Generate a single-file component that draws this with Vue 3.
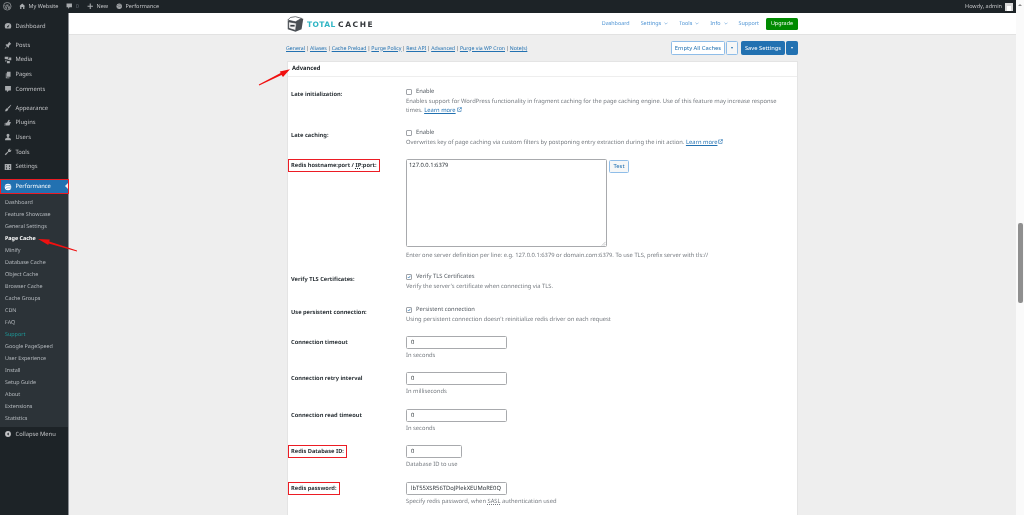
<script setup>
const topLinks = ['General','Aliases','Cache Preload','Purge Policy','Rest API','Advanced','Purge via WP Cron','Note(s)']
const menuA = [
  { t: 'Posts', d: 'M7 1l3 3-1 .6-2.200 2.200.2 1.600-1 1L4.200 7.600 1.500 10.500l-.5-.5 2.900-2.700L2 5.500l1-1 1.600.2L6.400 2.500z' },
  { t: 'Media', d: 'M1 1h5v3H1zM7 2h3v4H7V5H5V4h2zM2 5h3v1H3v2H2zM4 7h4v3H4z' },
  { t: 'Pages', d: 'M4 1h5v7H4zM2.500 3v7h5V9H3.500V3z' },
  { t: 'Comments', d: 'M1.500 1.500h8v6h-3l-2.500 2.500v-2.500H1.500z' },
]
const menuB = [
  { t: 'Appearance', d: 'M9.500 1L10 1.500 6.500 6.500 5 5zM4.500 5.500l1.500 1.500-.8 1.500C4 10 2.500 10 1 10c1-.7 1-2 1.500-3z' },
  { t: 'Plugins', d: 'M6.500 1L8 1.500 7 4h2.500l-.5 1.500L7.500 9H2V5h2zM1 5.500V9.500h.5V5.500z' },
  { t: 'Users', d: 'M5.500 1a2 2 0 0 1 2 2.200c0 1-.6 2-1.200 2.300v.8L9.500 8v2h-8V8l3.200-1.700v-.8C4.100 5.200 3.500 4.200 3.500 3.200a2 2 0 0 1 2-2.200z' },
  { t: 'Tools', d: 'M8 1a2.500 2.500 0 0 1 1 .2L7.500 2.700 8.300 3.500 9.800 2a2.500 2.500 0 0 1-3.300 3.300L2.500 10 1 8.500l4.700-4A2.500 2.500 0 0 1 8 1z' },
  { t: 'Settings', d: 'M1 1.500h9v8H1zM3 3v1.500h1V3zM3 6v2.500h1V6zM7 3v2.500h1V3zM7 7v1.500h1V7z' },
]
const sub = ['Dashboard','Feature Showcase','General Settings','Page Cache','Minify','Database Cache','Object Cache','Browser Cache','Cache Groups','CDN','FAQ','Support','Google PageSpeed','User Experience','Install','Setup Guide','About','Extensions','Statistics']
const subClass = (s) => ({ current: s === 'Page Cache', support: s === 'Support' })
const numeric = [
  { l: 'Connection timeout', v: '0', h: 'In seconds' },
  { l: 'Connection retry interval', v: '0', h: 'In milliseconds' },
  { l: 'Connection read timeout', v: '0', h: 'In seconds' },
]
</script>

<template>
  <div class="page">
    <header class="adminbar">
      <div class="ab-left">
        <svg class="ab-wp" viewBox="0 0 20 20"><circle cx="10" cy="10" r="9" fill="none" stroke="#a7aaad" stroke-width="1.600"/><path d="M4 7l3.500 9 2-6-1-3M8 7h5M11 7l3 9 2.500-7" fill="none" stroke="#a7aaad" stroke-width="1.600"/></svg>
        <span class="ab-item"><svg class="ab-ic" viewBox="0 0 12 12"><path d="M6 1l5.500 5H10v5H7.500V7.500h-3V11H2V6H.5z" fill="#a7aaad"/></svg>My Website</span>
        <span class="ab-item dim"><svg class="ab-ic" viewBox="0 0 12 12"><path d="M1 1h10v7H6.500L4 11V8H1z" fill="#a7aaad"/></svg>0</span>
        <span class="ab-item"><svg class="ab-ic" viewBox="0 0 12 12"><path d="M5 1h2v4h4v2H7v4H5V7H1V5h4z" fill="#a7aaad"/></svg>New</span>
        <span class="ab-item"><svg class="ab-ic" viewBox="0 0 12 12"><circle cx="6" cy="6" r="5" fill="#a7aaad"/><path d="M2 5c3-2 5-2 8-1M3 8c2-1.500 4-1.500 7-1" stroke="#1d2327" stroke-width=".7" fill="none"/></svg>Performance</span>
      </div>
      <div class="ab-right">Howdy, admin<span class="avatar"><i></i></span></div>
    </header>

    <div class="body">
      <aside class="side">
        <div class="m-item m-first"><svg class="m-ic" viewBox="0 0 11 11"><path d="M5.500 1.500a4.500 4.500 0 0 1 4.500 4.500c0 1.200-.4 2.300-1.100 3H2.100A4.600 4.600 0 0 1 1 6a4.500 4.500 0 0 1 4.500-4.500zM7.600 3.400L5.200 5.500a1 1 0 1 0 1 1z" fill="#a7aaad" fill-rule="evenodd"/></svg>Dashboard</div>
        <div class="m-group">
          <div v-for="m in menuA" :key="m.t" class="m-item"><svg class="m-ic" viewBox="0 0 11 11"><path :d="m.d" fill="#a7aaad" fill-rule="evenodd"/></svg>{{ m.t }}</div>
        </div>
        <div class="m-group">
          <div v-for="m in menuB" :key="m.t" class="m-item"><svg class="m-ic" viewBox="0 0 11 11"><path :d="m.d" fill="#a7aaad" fill-rule="evenodd"/></svg>{{ m.t }}</div>
        </div>
        <div class="m-perf">
          <svg class="m-ic" viewBox="0 0 11 11"><circle cx="5.500" cy="5.500" r="4.500" fill="#fff"/><path d="M1.500 4.500c3-1.500 5-1.500 8-.5M2.500 8c2-1.500 4-1.500 7-1" stroke="#2271b1" stroke-width=".7" fill="none"/></svg>Performance
          <span class="m-notch"></span>
        </div>
        <ul class="m-sub">
          <li v-for="s in sub" :key="s" :class="subClass(s)">{{ s }}</li>
        </ul>
        <div class="m-item m-collapse"><svg class="m-ic" viewBox="0 0 11 11"><circle cx="5.500" cy="5.500" r="4" fill="#c3c4c7"/><path d="M6.500 3.500v4l-2.500-2z" fill="#1d2327"/></svg>Collapse Menu</div>
      </aside>

      <main class="main">
        <div class="w3-head">
          <div class="w3-inner">
            <div class="logo">
              <svg class="logo-box" viewBox="0 0 22 20"><path d="M2 6.500L9 2l11 2-2 12-7 3-9-3z" fill="#4a4f54"/><path d="M3 7.500l9 1.500-.8 8.500-8-2.500z" fill="#f4f4f4" stroke="#3a3f44" stroke-width=".8"/><path d="M5 2.500l-3 3 9 2 7-4-7-2z" fill="#fff" stroke="#3a3f44" stroke-width=".8"/><path d="M5 11h5v2H5z" fill="#3a3f44"/></svg>
              <span class="logo-total">TOTAL</span><span class="logo-cache">CACHE</span>
            </div>
            <nav class="w3-nav">
              <a>Dashboard</a>
              <a>Settings<svg class="chev" viewBox="0 0 6 4"><path d="M.7.700L3 3l2.300-2.300" fill="none" stroke="#4f94d4" stroke-width=".8"/></svg></a>
              <a>Tools<svg class="chev" viewBox="0 0 6 4"><path d="M.7.700L3 3l2.300-2.300" fill="none" stroke="#4f94d4" stroke-width=".8"/></svg></a>
              <a>Info<svg class="chev" viewBox="0 0 6 4"><path d="M.7.700L3 3l2.300-2.300" fill="none" stroke="#4f94d4" stroke-width=".8"/></svg></a>
              <a>Support</a>
              <a class="upgrade">Upgrade</a>
            </nav>
          </div>
        </div>

        <div class="content">
          <div class="subbar">
            <div class="links">
              <template v-for="(l, i) in topLinks" :key="l">
                <a>{{ l }}</a><span v-if="i < topLinks.length - 1" class="sep">|</span>
              </template>
            </div>
            <div class="actions">
              <button class="btn ghost wide">Empty All Caches</button>
              <button class="btn ghost drop"><i class="caret dark"></i></button>
              <button class="btn solid save">Save Settings</button>
              <button class="btn solid drop"><i class="caret"></i></button>
            </div>
          </div>

          <section class="panel">
            <h3 class="panel-head">Advanced</h3>
            <div class="panel-body">
              <div class="row r-late">
                <div class="lab">Late initialization:</div>
                <div class="val">
                  <label class="check"><i class="cb"></i>Enable</label>
                  <p class="desc">Enables support for WordPress functionality in fragment caching for the page caching engine. Use of this feature may increase response times. <a>Learn more</a><svg class="ext" viewBox="0 0 8 8"><path d="M3 1.500H1v5.500h5.500V5M4 1h3v3M7 1L3.500 4.500" fill="none" stroke="#2271b1" stroke-width="1"/></svg></p>
                </div>
              </div>
              <div class="row r-late2">
                <div class="lab">Late caching:</div>
                <div class="val">
                  <label class="check"><i class="cb"></i>Enable</label>
                  <p class="desc">Overwrites key of page caching via custom filters by postponing entry extraction during the init action. <a>Learn more</a><svg class="ext" viewBox="0 0 8 8"><path d="M3 1.500H1v5.500h5.500V5M4 1h3v3M7 1L3.500 4.500" fill="none" stroke="#2271b1" stroke-width="1"/></svg></p>
                </div>
              </div>
              <div class="row r-redis">
                <div class="lab lab-top"><span class="mark">Redis hostname:port / <abbr>IP</abbr>:port:</span></div>
                <div class="val">
                  <div class="ta-row">
                    <div class="ta">127.0.0.1:6379<svg class="grip" viewBox="0 0 6 6"><path d="M5.500 1L1 5.500M5.500 3.500L3.500 5.500" stroke="#8c8f94" stroke-width=".6"/></svg></div>
                    <button class="btn ghost test">Test</button>
                  </div>
                  <p class="desc d-ta">Enter one server definition per line: e.g. 127.0.0.1:6379 or domain.com:6379. To use TLS, prefix server with tls://</p>
                </div>
              </div>
              <div class="row r-verify">
                <div class="lab">Verify TLS Certificates:</div>
                <div class="val">
                  <label class="check"><i class="cb on"><svg viewBox="0 0 8 8"><path d="M1.500 4l2 2L6.800 1.500" fill="none" stroke="#2271b1" stroke-width="1.400"/></svg></i>Verify TLS Certificates</label>
                  <p class="desc">Verify the server's certificate when connecting via TLS.</p>
                </div>
              </div>
              <div class="row r-persist">
                <div class="lab">Use persistent connection:</div>
                <div class="val">
                  <label class="check"><i class="cb on"><svg viewBox="0 0 8 8"><path d="M1.500 4l2 2L6.800 1.500" fill="none" stroke="#2271b1" stroke-width="1.400"/></svg></i>Persistent connection</label>
                  <p class="desc">Using persistent connection doesn't reinitialize redis driver on each request</p>
                </div>
              </div>
              <div v-for="n in numeric" :key="n.l" class="row r-num">
                <div class="lab lab-top">{{ n.l }}</div>
                <div class="val">
                  <div class="inp">{{ n.v }}</div>
                  <p class="desc d-in">{{ n.h }}</p>
                </div>
              </div>
              <div class="row r-num">
                <div class="lab lab-top"><span class="mark">Redis Database ID:</span></div>
                <div class="val">
                  <div class="inp short">0</div>
                  <p class="desc d-in">Database ID to use</p>
                </div>
              </div>
              <div class="row r-num">
                <div class="lab lab-top"><span class="mark">Redis password:</span></div>
                <div class="val">
                  <div class="inp">lbT55XSR56TDoJPlekXEUMoRE0Q</div>
                  <p class="desc d-in">Specify redis password, when <abbr>SASL</abbr> authentication used</p>
                </div>
              </div>
            </div>
          </section>
        </div>
      </main>

      <div class="scroll">
        <i class="sc-up"></i>
        <i class="sc-thumb"></i>
      </div>
    </div>

    <svg class="arrows" viewBox="0 0 1024 515">
      <path d="M258.800 84.600L280.600 73.100 279.800 71.500 290 69.300 283 77 281.500 75 259.200 85.400z" fill="#f01010"/>
      <path d="M77 250.600L49.300 241.400 49.700 239.600 38 239 48.300 245 48.700 243.400 77 251.400z" fill="#f01010"/>
    </svg>
  </div>
</template>

<style scoped>
.page { position: relative; width: 1024px; height: 515px; overflow: hidden; display: flex; flex-direction: column; background: #fafafa; font-family: "Noto Sans", "Open Sans", sans-serif; font-size: 5.800px; line-height: 9px; color: #50575e; text-rendering: geometricPrecision; filter: blur(.3px); }
.adminbar { height: 13px; flex: none; background: #1d2327; color: #c3c4c7; display: flex; justify-content: space-between; align-items: center; padding: 0 3px; width: 1016px; box-sizing: border-box; font-size: 5.500px; }
.ab-left { display: flex; align-items: center; }
.ab-wp { width: 8.500px; height: 8.500px; margin-right: 7.500px; }
.ab-item { display: flex; align-items: center; margin-right: 8px; gap: 3px; }
.ab-item.dim { color: #646970; }
.ab-ic { width: 6.500px; height: 6.500px; }
.ab-right { display: flex; align-items: center; gap: 3px; }
.avatar { width: 8px; height: 8px; background: #d9d9d9; display: flex; align-items: flex-end; justify-content: center; }
.avatar i { width: 3.500px; height: 5px; background: #fff; }

.body { flex: 1; min-height: 0; display: flex; }
.side { width: 68px; flex: none; background: #1d2327; border-right: 1px solid #8c8f94; color: #c3c4c7; font-size: 5.800px; }
.m-item { height: 14.600px; display: flex; align-items: center; padding-left: 4px; gap: 3.500px; }
.m-ic { width: 8px; height: 8px; flex: none; }
.m-first { margin-top: 6px; }
.m-group { margin-top: 4.500px; }
.m-perf { position: relative; margin-top: 5.500px; height: 15px; box-sizing: border-box; background: #2271b1; color: #fff; display: flex; align-items: center; padding-left: 3px; gap: 3.500px; border: 1px solid #ec1c24; width: 69px; }
.m-notch { position: absolute; right: 0; top: 3px; border: 3.500px solid transparent; border-right-color: #f0f0f1; border-left-width: 0; }
.m-sub { list-style: none; margin: 0; padding: 2px 0 2.500px 5px; background: #2c3338; }
.m-sub li { height: 12px; line-height: 12px; color: #b4b9be; font-size: 5.400px; }
.m-sub li.current { color: #fff; font-weight: 700; }
.m-sub li.support { color: #1d9a9a; }
.m-collapse { height: 15px; }

.main { flex: 1; min-width: 0; display: flex; flex-direction: column; background: #eeeeee; }
.w3-head { height: 21px; background: #fff; border-bottom: 1px solid #e2e2e2; flex: none; padding-left: 217px; }
.w3-inner { width: 512px; height: 21px; display: flex; align-items: center; justify-content: space-between; }
.logo { display: flex; align-items: center; }
.logo-box { width: 19px; height: 18px; margin-right: 2px; }
.logo-total { font-family: "DejaVu Sans", sans-serif; font-weight: 700; font-size: 7.500px; color: #2fb5c4; letter-spacing: .4px; margin-right: 2.500px; padding-top: 2px; }
.logo-cache { font-family: "DejaVu Sans", sans-serif; font-weight: 700; font-size: 7.500px; color: #33373b; letter-spacing: 1.600px; padding-top: 2px; }
.w3-nav { display: flex; align-items: center; gap: 11px; color: #4f94d4; font-size: 5.400px; }
.w3-nav a { display: flex; align-items: center; gap: 3px; }
.chev { width: 4px; height: 3px; }
.w3-nav .upgrade { height: 12px; padding: 0 5px; margin-left: -4px; background: #008a00; color: #fff; border-radius: 1.500px; }

.content { padding-left: 217px; width: 512px; }
.subbar { height: 25px; display: flex; justify-content: space-between; align-items: center; padding-top: 1px; box-sizing: border-box; }
.links { color: #50575e; font-size: 5.200px; }
.links a { color: #2271b1; text-decoration: underline; }
.sep { margin: 0 1px; }
.actions { display: flex; }
.btn { font: inherit; font-size: 5.800px; height: 13.500px; padding: 0; border-radius: 1.500px; box-sizing: border-box; }
.ghost { background: #f6f7f7; border: 1px solid #8fbde8; color: #2271b1; }
.solid { background: #2271b1; border: 1px solid #2271b1; color: #fff; }
.wide { width: 54px; background: #fff; }
.drop { width: 12px; display: flex; align-items: center; justify-content: center; margin-left: 1px; }
.save { width: 44px; margin-left: 3px; }
.caret { width: 0; height: 0; border: 1.500px solid transparent; border-top: 2px solid #fff; border-bottom: 0; }
.caret.dark { border-top-color: #2271b1; }

.panel { margin: 1px 0 0 1px; width: 511px; background: #fff; border: 1px solid #e4e4e4; box-sizing: border-box; }
.panel-head { margin: 0; height: 14px; line-height: 13px; padding-left: 4px; font-size: 5.800px; font-weight: 700; color: #1d2327; border-bottom: 1px solid #eeeeee; }
.panel-body { padding: 9.500px 0 0 3px; }
.row { display: grid; grid-template-columns: 115px 374px; }
.r-late { height: 41px; }
.r-late2 { height: 31px; }
.r-redis { height: 113px; }
.r-verify { height: 33px; }
.r-persist { height: 31px; }
.r-num { height: 36.500px; }
.lab { font-weight: 700; color: #2c3338; padding-top: 3px; font-size: 5.700px; }
.lab-top { padding-top: 2px; }
.mark { display: inline-block; border: 1px solid #ec1c24; padding: 1px 2px; margin: -2px -3px; }
abbr { text-decoration: underline dotted; }
.check { display: flex; align-items: center; gap: 4px; height: 10px; }
.cb { width: 6px; height: 6px; border: 1px solid #a0a3a8; border-radius: 1px; box-sizing: border-box; background: #fff; display: flex; }
.cb svg { width: 100%; height: 100%; }
.desc { margin: 0; color: #74797f; }
.desc a { color: #2271b1; text-decoration: underline; }
.ext { width: 5px; height: 5px; margin-left: 1px; }
.ta-row { display: flex; gap: 2px; align-items: flex-start; }
.ta { position: relative; width: 201px; height: 88px; box-sizing: border-box; border: 1px solid #a8aaad; border-radius: 1.500px; padding: 1px 2px; background: #fff; color: #2c3338; }
.grip { position: absolute; right: 0; bottom: 0; width: 5px; height: 5px; }
.test { width: 20px; height: 13px; margin-top: 1px; background: #f6f7f7; }
.d-ta { margin-top: 4px; }
.inp { width: 101px; height: 13px; box-sizing: border-box; border: 1px solid #a8aaad; border-radius: 1.500px; background: #fff; color: #2c3338; padding: 1px 4px; white-space: nowrap; overflow: hidden; line-height: 9px; }
.inp.short { width: 56px; }
.d-in { margin-top: 2px; }

.scroll { position: relative; width: 8px; flex: none; background: #fafafa; }
.sc-up { position: absolute; top: -9px; left: 2px; border: 2px solid transparent; border-bottom: 2.500px solid #8c8c8c; border-top: 0; }
.sc-thumb { position: absolute; left: 1.500px; top: 210px; width: 5px; height: 80px; background: #8f8f8f; border-radius: 2px; }
.arrows { position: absolute; inset: 0; width: 1024px; height: 515px; pointer-events: none; }
</style>

<style>
html, body { margin: 0; overflow: hidden; }
</style>
